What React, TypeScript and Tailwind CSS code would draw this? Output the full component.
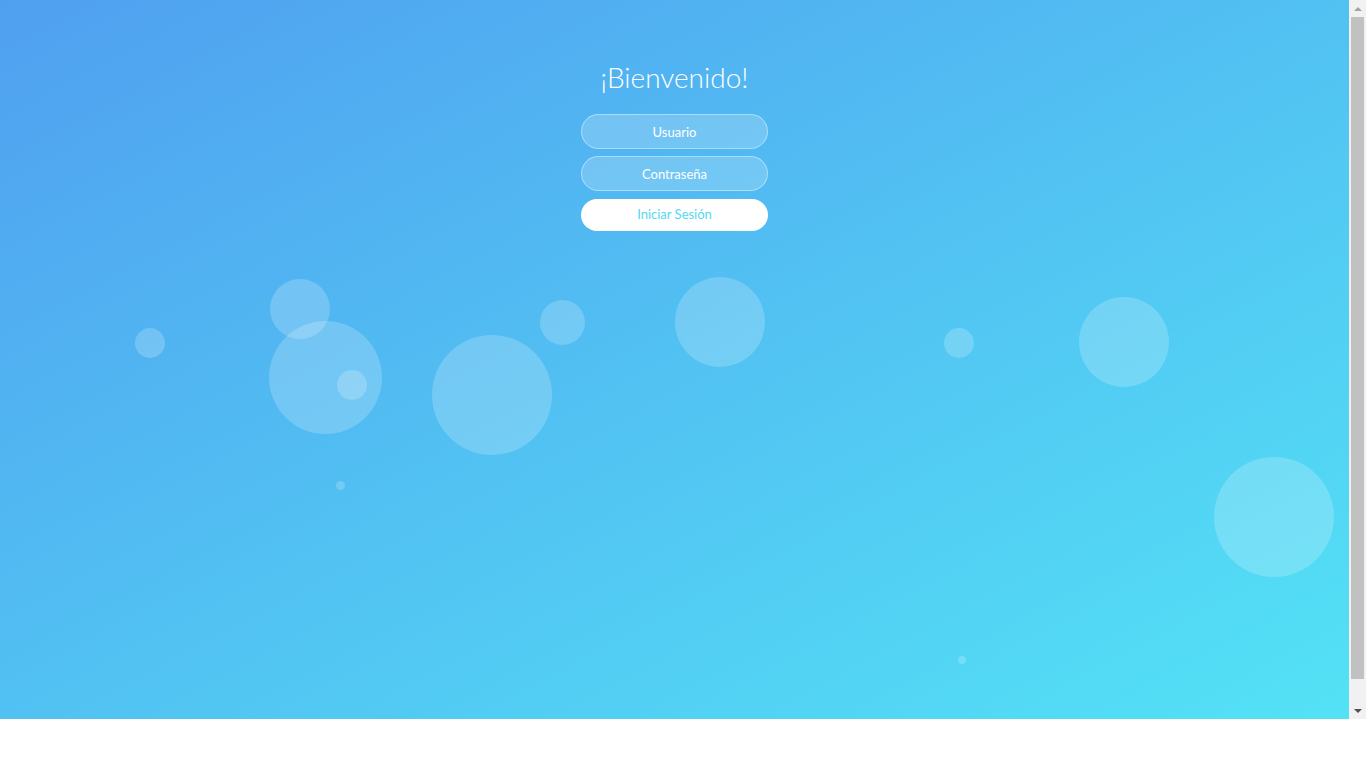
import React from "react";

const bubbles: { x: number; y: number; d: number }[] = [
  { x: 150, y: 343, d: 30 },
  { x: 300, y: 309, d: 60 },
  { x: 325.5, y: 377.5, d: 113 },
  { x: 352, y: 385, d: 30 },
  { x: 340.5, y: 485, d: 9 },
  { x: 492, y: 395, d: 120 },
  { x: 562.5, y: 322.5, d: 45 },
  { x: 720, y: 321.5, d: 90 },
  { x: 959, y: 343, d: 30 },
  { x: 1124, y: 342, d: 90 },
  { x: 1274, y: 517, d: 120 },
  { x: 962, y: 660, d: 8 },
];

export default function App() {
  return (
    <div className="flex h-[719px] w-full" style={{ fontFamily: "Lato, 'Open Sans', sans-serif" }}>
      <div className="relative flex-1 overflow-hidden bg-[linear-gradient(to_bottom_right,#50a0f0,#53e2f5)]">
        <ul className="absolute inset-0 z-0">
          {bubbles.map((b, i) => (
            <li
              key={i}
              className="absolute rounded-full bg-white/20"
              style={{ left: b.x - b.d / 2, top: b.y - b.d / 2, width: b.d, height: b.d }}
            />
          ))}
        </ul>
        <div className="relative z-10 flex flex-col items-center pt-[60px]">
          <h1 className="text-[28px] leading-[34px] font-light text-white">¡Bienvenido!</h1>
          <form className="mt-[20px] flex flex-col items-center gap-[7px]" onSubmit={(e) => e.preventDefault()}>
            <input
              type="text"
              placeholder="Usuario"
              className="h-[35px] w-[187px] rounded-full border border-white/40 bg-white/20 text-center text-[13px] text-white placeholder:text-white outline-none"
            />
            <input
              type="password"
              placeholder="Contraseña"
              className="h-[35px] w-[187px] rounded-full border border-white/40 bg-white/20 text-center text-[13px] text-white placeholder:text-white outline-none"
            />
            <button
              type="submit"
              className="mt-[1px] h-[32px] w-[187px] rounded-full bg-white text-center text-[13px] text-[#53d8f3]"
            >
              Iniciar Sesión
            </button>
          </form>
        </div>
      </div>
      <div className="flex w-[17px] flex-col bg-[#f1f1f1]">
        <div className="flex h-[17px] items-center justify-center">
          <svg width="8" height="4" viewBox="0 0 8 4">
            <polygon points="0,4 4,0 8,4" fill="#a3a3a3" />
          </svg>
        </div>
        <div className="flex-1">
          <div className="mx-[2px] h-[662px] bg-[#c1c1c1]" />
        </div>
        <div className="flex h-[17px] items-center justify-center">
          <svg width="8" height="4" viewBox="0 0 8 4">
            <polygon points="0,0 8,0 4,4" fill="#505050" />
          </svg>
        </div>
      </div>
    </div>
  );
}
